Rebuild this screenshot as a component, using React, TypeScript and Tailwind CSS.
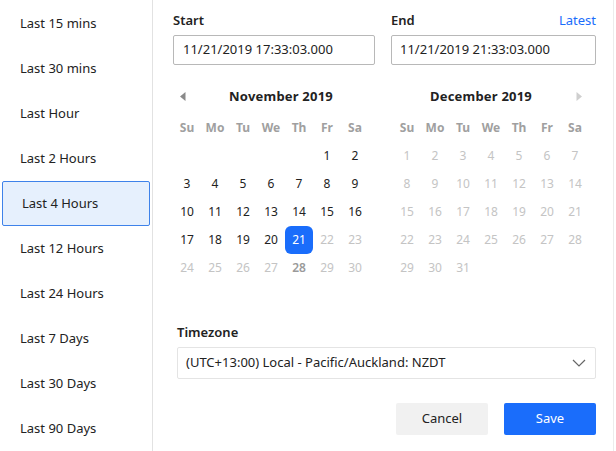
import React from "react";

const presets = [
  "Last 15 mins",
  "Last 30 mins",
  "Last Hour",
  "Last 2 Hours",
  "Last 4 Hours",
  "Last 12 Hours",
  "Last 24 Hours",
  "Last 7 Days",
  "Last 30 Days",
  "Last 90 Days",
];

const dayNames = ["Su", "Mo", "Tu", "We", "Th", "Fr", "Sa"];

type Cell = { d: number; kind: "normal" | "dim" | "sel" | "dimBold" } | null;

const novCells: Cell[] = [
  null, null, null, null, null,
  { d: 1, kind: "normal" }, { d: 2, kind: "normal" },
  ...[3, 4, 5, 6, 7, 8, 9, 10, 11, 12, 13, 14, 15, 16, 17, 18, 19, 20].map((d) => ({ d, kind: "normal" as const })),
  { d: 21, kind: "sel" },
  { d: 22, kind: "dim" }, { d: 23, kind: "dim" },
  { d: 24, kind: "dim" }, { d: 25, kind: "dim" }, { d: 26, kind: "dim" }, { d: 27, kind: "dim" },
  { d: 28, kind: "dimBold" }, { d: 29, kind: "dim" }, { d: 30, kind: "dim" },
];

const decCells: Cell[] = Array.from({ length: 31 }, (_, i) => ({ d: i + 1, kind: "dim" as const }));

function Calendar({ title, cells, arrow }: { title: string; cells: Cell[]; arrow: "left" | "right" }) {
  return (
    <div className="w-[196px]">
      <div className="flex items-center h-[24px] pt-[1px]">
        {arrow === "left" && (
          <div className="w-[20px] flex items-center justify-start pl-[7px]">
            <svg width="6" height="9" viewBox="0 0 6 9">
              <path d="M5.5 0 L0 4.5 L5.5 9 Z" fill="#8a8a8a" />
            </svg>
          </div>
        )}
        <div className="flex-1 text-center text-[13px] font-bold text-[#222] tracking-[0.2px]">{title}</div>
        {arrow === "right" && (
          <div className="w-[20px] flex items-center justify-end pr-[7px]">
            <svg width="6" height="9" viewBox="0 0 6 9">
              <path d="M0.5 0 L6 4.5 L0.5 9 Z" fill="#cfcfcf" />
            </svg>
          </div>
        )}
      </div>
      <div className="grid grid-cols-7 mt-[8px]">
        {dayNames.map((n) => (
          <div key={n} className="h-[24px] flex items-center justify-center text-[12px] font-bold text-[#a0a0a0]">
            {n}
          </div>
        ))}
      </div>
      <div className="grid grid-cols-7 mt-[2px]">
        {cells.map((c, i) =>
          c === null ? (
            <div key={i} className="h-[28px]" />
          ) : (
            <div key={i} className="h-[28px] flex items-center justify-center">
              {c.kind === "sel" ? (
                <div className="w-[28px] h-[28px] rounded-[6px] bg-[#1a6dfb] text-white text-[12px] flex items-center justify-center">
                  {c.d}
                </div>
              ) : (
                <span
                  className={
                    c.kind === "normal"
                      ? "text-[12px] text-[#222]"
                      : c.kind === "dimBold"
                      ? "text-[12px] text-[#9a9a9a] font-semibold"
                      : "text-[12px] text-[#c4c4c4]"
                  }
                >
                  {c.d}
                </span>
              )}
            </div>
          )
        )}
      </div>
    </div>
  );
}

export default function App() {
  return (
    <div
      className="w-[616px] h-[451px] flex bg-white text-[#222] overflow-hidden"
      style={{ fontFamily: '"Noto Sans", "Open Sans", sans-serif' }}
    >
      <div className="w-[153px] shrink-0 border-r border-[#e2e2e2] flex flex-col pt-[1px]">
        {presets.map((p) =>
          p === "Last 4 Hours" ? (
            <div
              key={p}
              className="h-[45px] mx-[2px] flex items-center pl-[19px] text-[13px] bg-[#e6f0fd] border border-[#3e82ea] rounded-[2px]"
            >
              {p}
            </div>
          ) : (
            <div key={p} className="h-[45px] flex items-center pl-[20px] text-[13px]">
              {p}
            </div>
          )
        )}
      </div>
      <div className="flex-1 relative pl-[20px] pt-[11px]">
        <div className="flex gap-[16px]">
          <div className="w-[202px]">
            <div className="h-[20px] flex items-center text-[13px] font-semibold">Start</div>
            <div className="mt-[4px] h-[30px] border border-[#b8b8b8] rounded-[2px] flex items-center pl-[9px] text-[13px]">
              11/21/2019 17:33:03.000
            </div>
          </div>
          <div className="w-[205px]">
            <div className="h-[20px] flex items-center justify-between text-[13px]">
              <span className="font-semibold">End</span>
              <span className="text-[#1a6dfb]">Latest</span>
            </div>
            <div className="mt-[4px] h-[30px] border border-[#b8b8b8] rounded-[2px] flex items-center pl-[8px] text-[13px]">
              11/21/2019 21:33:03.000
            </div>
          </div>
        </div>
        <div className="flex gap-[24px] mt-[19px]">
          <Calendar title="November 2019" cells={novCells} arrow="left" />
          <Calendar title="December 2019" cells={decCells} arrow="right" />
        </div>
        <div className="pl-[4px] mt-[41px] w-[423px]">
          <div className="h-[20px] flex items-center text-[13px] font-semibold">Timezone</div>
          <div className="mt-[4px] h-[32px] border border-[#e4e4e4] rounded-[2px] flex items-center justify-between pl-[8px] pr-[9px] text-[13px]">
            <span>(UTC+13:00) Local - Pacific/Auckland: NZDT</span>
            <svg width="14" height="8" viewBox="0 0 14 8">
              <path d="M1 1 L7 7 L13 1" fill="none" stroke="#666" strokeWidth="1.2" />
            </svg>
          </div>
          <div className="flex justify-end gap-[16px] mt-[24px]">
            <button className="w-[92px] h-[32px] bg-[#f1f1f1] rounded-[2px] text-[13px] text-[#222]">Cancel</button>
            <button className="w-[92px] h-[32px] bg-[#1a6dfb] rounded-[2px] text-[13px] text-white">Save</button>
          </div>
        </div>
        <div className="absolute right-[2px] top-0 bottom-0 w-[1px] bg-[#ececec]" />
      </div>
    </div>
  );
}
